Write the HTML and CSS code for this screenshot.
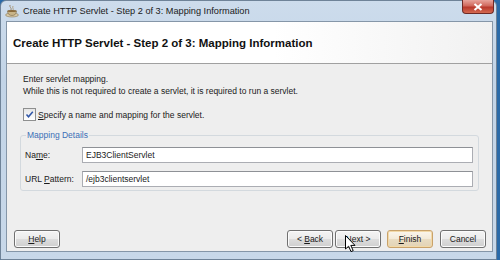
FILE: index.html
```html
<!DOCTYPE html>
<html lang="en">
  <head>
    <title>Create HTTP Servlet - Step 2 of 3: Mapping Information</title>
    <link rel="stylesheet" href="styles.css">
  </head>
  <body>
    <div class="window">
      <div class="titlebar">
        <svg class="app-icon" width="14" height="14" viewBox="0 0 14 14">
          <path d="M5 1 C4 3 7 4 6 6" stroke="#9a8a70" stroke-width="1" fill="none"/>
          <path d="M8 2 C7 4 9 5 8 6" stroke="#b0a080" stroke-width="1" fill="none"/>
          <ellipse cx="7" cy="11" rx="6.5" ry="2" fill="#d8c9a6" stroke="#8a7a5a" stroke-width="0.6"/>
          <path d="M2.5 7 L11.5 7 C11.5 10 9.5 11.5 7 11.5 C4.5 11.5 2.5 10 2.5 7 Z" fill="#c8b488" stroke="#7a6a4a" stroke-width="0.6"/>
          <ellipse cx="7" cy="7" rx="4.5" ry="1" fill="#8a6a3a"/>
        </svg>
        <span class="title-text">Create HTTP Servlet - Step 2 of 3: Mapping Information</span>
        <div class="close-btn">
          <svg width="10" height="8" viewBox="0 0 10 8">
            <path d="M1.5 1 L8.5 7 M8.5 1 L1.5 7" stroke="#ffffff" stroke-width="2"/>
          </svg>
        </div>
      </div>

      <div class="client">
        <div class="banner">Create HTTP Servlet - Step 2 of 3: Mapping Information</div>

        <div class="content">
          <p class="line">Enter servlet mapping.</p>
          <p class="line">While this is not required to create a servlet, it is required to run a servlet.</p>

          <label class="check-row">
            <span class="checkbox">
              <svg width="9" height="9" viewBox="0 0 9 9">
                <path d="M1.5 4.5 L3.5 6.8 L7.8 1.8" stroke="#2f55a8" stroke-width="1.5" fill="none"/>
              </svg>
            </span>
            <span><u>S</u>pecify a name and mapping for the servlet.</span>
          </label>

          <fieldset class="group">
            <legend>Mapping Details</legend>
            <div class="field-row">
              <span class="field-label">Na<u>m</u>e:</span>
              <div class="text-input">EJB3ClientServlet</div>
            </div>
            <div class="field-row">
              <span class="field-label">URL <u>P</u>attern:</span>
              <div class="text-input">/ejb3clientservlet</div>
            </div>
          </fieldset>
        </div>

        <div class="footer">
          <div class="btn help-btn"><u>H</u>elp</div>
          <div class="spacer"></div>
          <div class="btn">&lt;&nbsp;<u>B</u>ack</div>
          <div class="btn next-btn">
            <u>N</u>ext&nbsp;&gt;
            <svg class="cursor" width="12" height="18" viewBox="0 0 12 18">
              <path d="M0.5 0.5 L0.5 14 L3.6 11.2 L6 16.6 L8.2 15.6 L5.8 10.4 L10 10.4 Z" fill="#ffffff" stroke="#000000" stroke-width="1"/>
            </svg>
          </div>
          <div class="btn default-btn"><u>F</u>inish</div>
          <div class="btn cancel-btn">Cancel</div>
        </div>
      </div>
    </div>
  </body>
</html>
```

FILE: styles.css
```css
* {
  box-sizing: border-box;
}
body {
  margin: 0;
  width: 500px;
  height: 260px;
  overflow: hidden;
  background: #2a6aa8;
  font-family: "Liberation Sans", Arial, sans-serif;
}

/* ---- window frame ---- */
.window {
  width: 497px;
  height: 260px;
  background: linear-gradient(#cddcec, #c2d4e7 30%, #c8d8e9);
  border: 1px solid #6f8398;
  border-radius: 6px 6px 0 0;
  display: flex;
  flex-direction: column;
}
.titlebar {
  height: 20px;
  display: flex;
  align-items: center;
  padding-left: 4px;
}
.app-icon {
  margin-right: 4px;
}
.title-text {
  font-size: 9.2px;
  color: #1a1a1a;
  flex: 1;
}
.close-btn {
  width: 32px;
  height: 14px;
  align-self: flex-start;
  margin-top: -1px;
  margin-right: 2px;
  border: 1px solid #6e2a26;
  border-top: none;
  border-radius: 0 0 4px 4px;
  background: linear-gradient(#e8a49c, #d0685c 45%, #b8382c 55%, #d46a50);
  display: flex;
  align-items: center;
  justify-content: center;
}

/* ---- client area ---- */
.client {
  flex: 1;
  margin: 0 3px 7px 5px;
  border: 1px solid #8596a8;
  background: #eeeeee;
  display: flex;
  flex-direction: column;
}
.banner {
  height: 42px;
  background: linear-gradient(to right, #ffffff, #ffffff 55%, #f1f1f1);
  border-bottom: 1px solid #a0a0a0;
  font-size: 11.5px;
  font-weight: bold;
  color: #111;
  display: flex;
  align-items: center;
  padding-left: 6px;
  padding-top: 1px;
}
.content {
  flex: 1;
  padding: 9px 13px 0 13px;
  font-size: 8.5px;
  color: #1a1a1a;
}
.line {
  margin: 0;
  padding-left: 3px;
  line-height: 12px;
}
.check-row {
  display: flex;
  align-items: center;
  margin-top: 11px;
  padding-left: 3px;
  height: 13px;
}
.checkbox {
  width: 13px;
  height: 13px;
  border: 1px solid #8e8f8f;
  background: linear-gradient(#e6e6e6, #ffffff);
  margin-right: 2px;
  display: flex;
  align-items: center;
  justify-content: center;
}

/* ---- group box ---- */
.group {
  margin: 8px 0 0 0;
  padding: 0 5px 3px 4px;
  border: 1px solid #d3d9de;
  border-radius: 3px;
}
.group legend {
  color: #3b6eb6;
  padding: 0 1px;
  margin-left: 1px;
  line-height: 12px;
}
.field-row {
  display: flex;
  align-items: center;
  margin-top: 6px;
}
.field-row + .field-row {
  margin-top: 8px;
}
.field-label {
  width: 57px;
}
.text-input {
  flex: 1;
  height: 16px;
  background: #ffffff;
  border: 1px solid #abadb3;
  border-top-color: #8e9196;
  padding-left: 3px;
  line-height: 14px;
}

/* ---- buttons ---- */
.footer {
  height: 21px;
  display: flex;
  align-items: flex-start;
  padding: 0 6px 0 7px;
  font-size: 8.5px;
}
.spacer {
  flex: 1;
}
.btn {
  width: 46px;
  height: 18px;
  border: 1px solid #707070;
  border-radius: 3px;
  background: linear-gradient(#f4f4f4, #ebebeb 50%, #dddddd 51%, #cfcfcf);
  box-shadow: inset 0 0 0 1px #fbfbfb;
  display: flex;
  align-items: center;
  justify-content: center;
  color: #1a1a1a;
}
.next-btn {
  margin-left: 2px;
  position: relative;
}
.default-btn {
  margin-left: 6px;
  border-color: #c9a26a;
  box-shadow: inset 0 0 0 1px #f2d9a8;
  background: linear-gradient(#fbf6ec, #f3ead8 50%, #e9dcc2 51%, #e2d3b6);
}
.cancel-btn {
  margin-left: 7px;
}
.cursor {
  position: absolute;
  left: 9px;
  top: 4px;
}
```
